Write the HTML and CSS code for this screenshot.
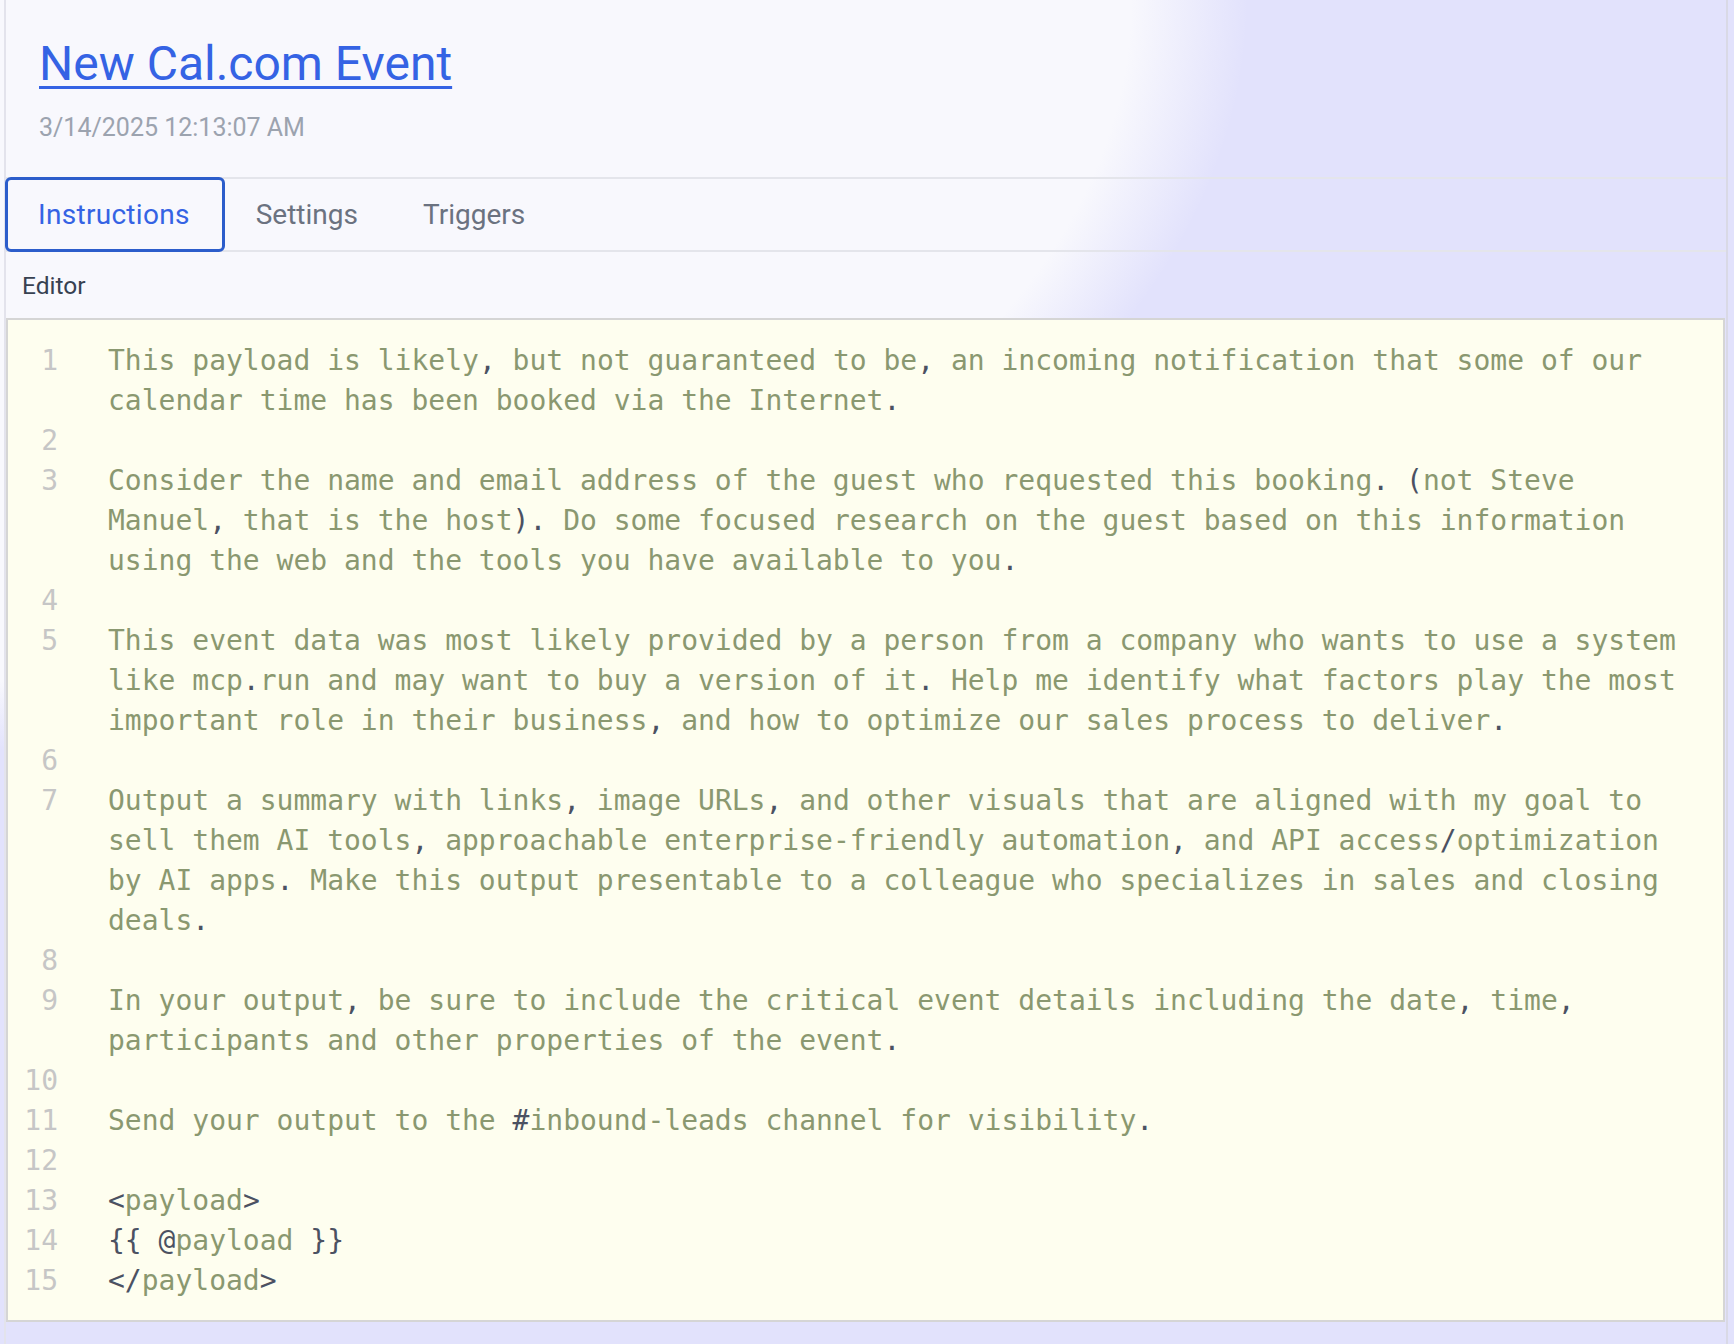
FILE: index.html
```html
<!DOCTYPE html>
<html lang="en">
<head>
<meta charset="utf-8">
<title>New Cal.com Event</title>
<link rel="stylesheet" href="styles.css">
</head>
<body>
<div class="panel">
  <header class="header">
    <h1 class="title"><a href="#">New Cal.com Event</a></h1>
    <div class="date">3/14/2025 12:13:07 AM</div>
  </header>
  <nav class="tabs">
    <div class="tab active">Instructions</div>
    <div class="tab">Settings</div>
    <div class="tab">Triggers</div>
  </nav>
  <div class="label">Editor</div>
  <div class="editor">
    <div class="row"><span class="num">1</span><span class="code">This payload is likely<span class="p">,</span> but not guaranteed to be<span class="p">,</span> an incoming notification that some of our calendar time has been booked via the Internet<span class="p">.</span></span></div>
    <div class="row"><span class="num">2</span><span class="code"></span></div>
    <div class="row"><span class="num">3</span><span class="code">Consider the name and email address of the guest who requested this booking<span class="p">.</span> <span class="p">(</span>not Steve Manuel<span class="p">,</span> that is the host<span class="p">).</span> Do some focused research on the guest based on this information using the web and the tools you have available to you<span class="p">.</span></span></div>
    <div class="row"><span class="num">4</span><span class="code"></span></div>
    <div class="row"><span class="num">5</span><span class="code">This event data was most likely provided by a person from a company who wants to use a system like mcp<span class="p">.</span>run and may want to buy a version of it<span class="p">.</span> Help me identify what factors play the most important role in their business<span class="p">,</span> and how to optimize our sales process to deliver<span class="p">.</span></span></div>
    <div class="row"><span class="num">6</span><span class="code"></span></div>
    <div class="row"><span class="num">7</span><span class="code">Output a summary with links<span class="p">,</span> image URLs<span class="p">,</span> and other visuals that are aligned with my goal to sell them AI tools<span class="p">,</span> approachable enterprise-friendly automation<span class="p">,</span> and API access<span class="p">/</span>optimization by AI apps<span class="p">.</span> Make this output presentable to a colleague who specializes in sales and closing deals<span class="p">.</span></span></div>
    <div class="row"><span class="num">8</span><span class="code"></span></div>
    <div class="row"><span class="num">9</span><span class="code">In your output<span class="p">,</span> be sure to include the critical event details including the date<span class="p">,</span> time<span class="p">,</span> participants and other properties of the event<span class="p">.</span></span></div>
    <div class="row"><span class="num">10</span><span class="code"></span></div>
    <div class="row"><span class="num">11</span><span class="code">Send your output to the <span class="p">#</span>inbound-leads channel for visibility<span class="p">.</span></span></div>
    <div class="row"><span class="num">12</span><span class="code"></span></div>
    <div class="row"><span class="num">13</span><span class="code"><span class="p">&lt;</span>payload<span class="p">&gt;</span></span></div>
    <div class="row"><span class="num">14</span><span class="code"><span class="p">{{ @</span>payload<span class="p"> }}</span></span></div>
    <div class="row"><span class="num">15</span><span class="code"><span class="p">&lt;/</span>payload<span class="p">&gt;</span></span></div>
  </div>
</div>
</body>
</html>
```
FILE: styles.css
```css
html, body {
  margin: 0;
  padding: 0;
}

body {
  width: 1734px;
  min-height: 1344px;
  font-family: Roboto, "Liberation Sans", sans-serif;
  background:
    radial-gradient(ellipse 1300px 783px at 0 0, #f8f8fd 0%, #f8f8fd 87%, rgba(248, 248, 253, 0) 96%),
    #e2e2fc;
  overflow: hidden;
}

.panel {
  margin-left: 4px;
  width: 1720px;
  min-height: 1344px;
  border-left: 2px solid #e3e3ec;
  border-right: 2px solid #d9d9e6;
}

.header {
  padding: 36px 0 0 33px;
}

.title {
  margin: 0;
  font-size: 48px;
  line-height: 56px;
  font-weight: 400;
}

.title a {
  color: #3563e4;
  text-decoration: underline;
  text-decoration-thickness: 3px;
  text-underline-offset: 6px;
}

.date {
  margin-top: 21px;
  font-size: 25px;
  line-height: 30px;
  color: #9ca3af;
}

.tabs {
  display: flex;
  margin-top: 34px;
  height: 71px;
  border-top: 2px solid #e4e5eb;
  border-bottom: 2px solid #e4e5eb;
}

.tab {
  margin: -2px 0;
  height: 69px;
  padding: 0 31px 0 28px;
  border: 3px solid transparent;
  border-radius: 6px;
  display: flex;
  align-items: center;
  font-size: 28px;
  color: #6b7280;
}

.tab.active {
  margin-left: -1px;
  padding: 0 32px 0 30px;
  border-color: #2c5dcb;
  color: #3563e4;
  letter-spacing: 0.3px;
}

.label {
  margin-top: 20px;
  padding-left: 16px;
  font-size: 24.5px;
  line-height: 28px;
  color: #374151;
}

.editor {
  margin: 18px 1px 0 0;
  border: 2px solid #d5d5d5;
  background: #fefeef;
  padding: 21px 0 19px;
  font-family: "DejaVu Sans Mono", "Liberation Mono", monospace;
  font-size: 28px;
  line-height: 40px;
}

.row {
  display: flex;
  min-height: 40px;
}

.num {
  flex: 0 0 50px;
  text-align: right;
  color: #c6c6c6;
}

.code {
  margin-left: 50px;
  width: 94.5ch;
  white-space: pre-wrap;
  color: #8a9870;
}

.p {
  color: #4b5162;
}
```
